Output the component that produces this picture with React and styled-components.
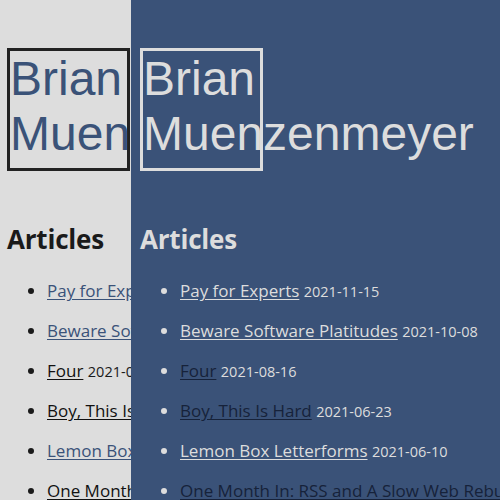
import React from "react";
import styled, { createGlobalStyle } from "styled-components";

const GlobalStyle = createGlobalStyle`
  html, body {
    margin: 0;
    padding: 0;
    height: 100%;
  }
`;

const themes = {
  light: {
    bg: "#dddddd",
    text: "#1a1a1a",
    title: "#3a5278",
    border: "#222222",
    link: "#3a5278",
    visited: "#111111",
    bullet: "#1a1a1a",
  },
  dark: {
    bg: "#3a5278",
    text: "#dddddd",
    title: "#dddddd",
    border: "#dddddd",
    link: "#dddddd",
    visited: "#16223a",
    bullet: "#dddddd",
  },
};

const articles = [
  { title: "Pay for Experts", date: "2021-11-15", visited: false },
  { title: "Beware Software Platitudes", date: "2021-10-08", visited: false },
  { title: "Four", date: "2021-08-16", visited: true },
  { title: "Boy, This Is Hard", date: "2021-06-23", visited: true },
  { title: "Lemon Box Letterforms", date: "2021-06-10", visited: false },
  { title: "One Month In: RSS and A Slow Web Rebuild", date: "2021-05-20", visited: true },
];

const Split = styled.div`
  display: flex;
  height: 500px;
  overflow: hidden;
`;

const Pane = styled.div`
  flex: ${(p) => (p.$mode === "light" ? "0 0 131px" : "1 1 auto")};
  background: ${(p) => themes[p.$mode].bg};
  color: ${(p) => themes[p.$mode].text};
  padding-left: ${(p) => (p.$mode === "light" ? "7px" : "9px")};
  overflow: hidden;
  box-sizing: border-box;
`;

const Content = styled.main`
  width: 600px;
`;

const Title = styled.h1`
  box-sizing: border-box;
  width: 123px;
  height: 123px;
  margin: 48px 0 0;
  border: 3px solid ${(p) => themes[p.$mode].border};
  color: ${(p) => themes[p.$mode].title};
  font-family: "Liberation Sans", Arial, sans-serif;
  font-weight: normal;
  font-size: 48px;
  line-height: 55px;
`;

const Heading = styled.h2`
  margin: 48px 0 0;
  font-family: "Open Sans", "Noto Sans", sans-serif;
  font-weight: 700;
  font-size: 26px;
  line-height: 40px;
  letter-spacing: -0.2px;
`;

const List = styled.ul`
  margin: 20px 0 0;
  padding-left: 40px;
  font-family: "Open Sans", "Noto Sans", sans-serif;

  li::marker {
    color: ${(p) => themes[p.$mode].bullet};
  }
`;

const Item = styled.li`
  white-space: nowrap;
  font-size: 17px;
  height: 40px;
  line-height: 24px;
`;

const Link = styled.a`
  color: ${(p) => (p.$visited ? themes[p.$mode].visited : themes[p.$mode].link)};
  text-decoration: underline;
  text-underline-offset: 2px;
`;

const Date = styled.span`
  font-size: 14.5px;
  line-height: 1;
`;

const Page = ({ mode }) => (
  <Pane $mode={mode}>
    <Content>
      <Title $mode={mode}>Brian Muenzenmeyer</Title>
      <Heading>Articles</Heading>
      <List $mode={mode}>
        {articles.map((a) => (
          <Item key={a.title}>
            <Link href="#" $mode={mode} $visited={a.visited}>
              {a.title}
            </Link>{" "}
            <Date>{a.date}</Date>
          </Item>
        ))}
      </List>
    </Content>
  </Pane>
);

export default function App() {
  return (
    <>
      <GlobalStyle />
      <Split>
        <Page mode="light" />
        <Page mode="dark" />
      </Split>
    </>
  );
}
